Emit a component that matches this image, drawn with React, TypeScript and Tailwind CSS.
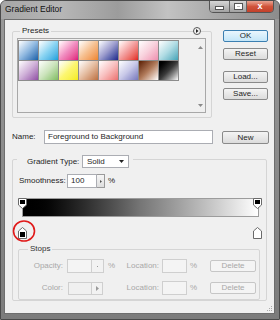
import React from "react";

// PRESET SWATCHES
const presets = [
  "bg-linear-to-br from-[#ffffff] via-[#8fb8e0] to-[#1560a8]",
  "bg-linear-to-br from-[#ffffff] via-[#8ad4f2] to-[#0aa0dc]",
  "bg-linear-to-br from-[#ffffff] via-[#f08cc0] to-[#de0a7c]",
  "bg-linear-to-br from-[#ffffff] via-[#f6c090] to-[#ee8428]",
  "bg-linear-to-br from-[#ffffff] via-[#9a9acc] to-[#24248a]",
  "bg-linear-to-br from-[#ffffff] via-[#f29a9a] to-[#e01c1c]",
  "bg-linear-to-br from-[#ffffff] via-[#f8d0dc] to-[#ee90b0]",
  "bg-linear-to-br from-[#ffffff] via-[#b0dce4] to-[#40a4b8]",
  "bg-linear-to-br from-[#ffffff] via-[#cfb0d8] to-[#9050a4]",
  "bg-linear-to-br from-[#ffffff] via-[#cce4bc] to-[#80bc60]",
  "bg-linear-to-br from-[#ffffff] via-[#fcf670] to-[#f4ec00]",
  "bg-linear-to-br from-[#ffffff] via-[#e4bca0] to-[#bc7040]",
  "bg-linear-to-br from-[#ffffff] via-[#f8c0c0] to-[#ea7070]",
  "bg-linear-to-br from-[#ffffff] via-[#c8c8e8] to-[#7878bc]",
  "bg-linear-to-br from-[#5a1e00] via-[#b07a5a] to-[#ffffff]",
  "bg-linear-to-br from-[#000000] via-[#3a3a3a] to-[#ffffff]",
];

const Btn = ({
  label,
  ok = false,
  className = "",
}: {
  label: string;
  ok?: boolean;
  className?: string;
}) => (
  <div
    className={`flex items-center justify-center rounded-[2px] border text-[8px] leading-none text-[#1e1e1e] ${
      ok
        ? "border-[#3c7fb1] bg-linear-to-b from-[#eaf6fd] to-[#c4e6f8]"
        : "border-[#8a8a8a] bg-linear-to-b from-[#f4f4f4] to-[#dcdcdc]"
    } ${className}`}
  >
    {label}
  </div>
);

const TopStop = ({ fill }: { fill: string }) => (
  <svg width="9" height="11" viewBox="0 0 9 11">
    <path d="M0.5 0.5 H8.5 V7 L4.5 10.5 L0.5 7 Z" fill="#fff" stroke="#6a6a6a" />
    <rect x="2" y="2" width="5" height="4" fill={fill} />
  </svg>
);

const BottomStop = ({ fill }: { fill: string }) => (
  <svg width="9" height="12" viewBox="0 0 9 12">
    <path d="M4.5 0.5 L8.5 4 V11.5 H0.5 V4 Z" fill="#fff" stroke="#6a6a6a" />
    <rect x="2" y="5" width="5" height="5" fill={fill} />
  </svg>
);

const App = () => {
  return (
    <div className="w-[280px] h-[320px] flex flex-col overflow-hidden rounded-t-[6px] border border-[#4a4a4a] bg-linear-to-b from-[#9a9a9a] to-[#7c7c7c] font-['Liberation_Sans',Arial,sans-serif] text-[8px] text-[#1e1e1e]">

      {/* TITLE BAR */}
      <div className="h-[18px] flex items-start bg-[linear-gradient(90deg,#a6a6a6_0%,#b6b6b6_22%,#9c9c9c_42%,#c2c2c2_60%,#a4a4a4_80%,#8c8c8c_100%)]">
        <span className="pl-[4px] pt-[4px] text-[8.5px] leading-none text-[#111]">
          Gradient Editor
        </span>

        <div className="ml-auto mr-[5px] -mt-px flex h-[13px] overflow-hidden rounded-b-[4px] border border-[#555]">
          <div className="w-[20px] flex items-end justify-center pb-[3px] bg-linear-to-b from-[#d6d6d6] to-[#a2a2a2] border-r border-[#666]">
            <div className="w-[7px] h-[2px] bg-white border border-[#555] box-content -mb-px" />
          </div>
          <div className="w-[17px] flex items-center justify-center bg-linear-to-b from-[#d6d6d6] to-[#a2a2a2] border-r border-[#666]">
            <div className="w-[7px] h-[5px] border-2 border-white outline outline-[#555]" />
          </div>
          <div className="w-[26px] flex items-center justify-center bg-linear-to-b from-[#e8a392] via-[#d0533a] to-[#c2402a] text-white text-[9px] font-bold leading-none">
            x
          </div>
        </div>
      </div>

      {/* CLIENT AREA */}
      <div className="ml-[3px] mr-[4px] h-[295px] border border-[#6e6e6e] bg-[#f0f0f0] relative">

        {/* PRESETS + BUTTONS */}
        <div className="flex items-start pt-[10px] pl-[7px]">

          <div className="relative mt-px w-[200px] h-[87px] rounded-[2px] border border-[#d5d5d5] pl-[4px] pt-[6px]">
            <span className="absolute left-[7px] -top-[6px] bg-[#f0f0f0] px-[2px] leading-[10px]">
              Presets
            </span>

            {/* menu arrow */}
            <div className="absolute right-[10px] -top-[5px] w-[8px] h-[8px] rounded-full border border-[#555] bg-[#f4f4f4] flex items-center justify-center">
              <svg width="4" height="4" viewBox="0 0 4 4">
                <path d="M1 0 L3.5 2 L1 4 Z" fill="#222" />
              </svg>
            </div>

            <div className="w-[189px] h-[75px] border border-[#a8a8a8] flex">
              <div className="flex-1 pt-px">
                <div className="inline-grid grid-cols-8 gap-px bg-[#8c8c8c] p-px">
                  {presets.map((p, i) => (
                    <div key={i} className={`w-[19px] h-[19px] ${p}`} />
                  ))}
                </div>
              </div>
              <div className="w-[10px] flex flex-col items-center justify-between pt-[7px] pb-[5px]">
                <svg width="5" height="3" viewBox="0 0 5 3">
                  <path d="M0 3 L2.5 0 L5 3 Z" fill="#8a8a8a" />
                </svg>
                <svg width="5" height="3" viewBox="0 0 5 3">
                  <path d="M0 0 L2.5 3 L5 0 Z" fill="#8a8a8a" />
                </svg>
              </div>
            </div>
          </div>

          <div className="ml-[11px] flex flex-col">
            <Btn label="OK" ok className="w-[45px] h-[12px]" />
            <Btn label="Reset" className="mt-[6px] w-[45px] h-[12px]" />
            <Btn label="Load..." className="mt-[11px] w-[45px] h-[12px]" />
            <Btn label="Save..." className="mt-[5px] w-[45px] h-[12px]" />
          </div>
        </div>

        {/* NAME ROW */}
        <div className="mt-[12px] pl-[7px] flex items-start">
          <span className="w-[32px] h-[14px] flex items-center">Name:</span>
          <div className="w-[169px] h-[14px] border border-[#abadb3] bg-white flex items-center pl-[3px]">
            Foreground to Background
          </div>
          <Btn label="New" className="ml-[9px] mt-px w-[47px] h-[13px]" />
        </div>

        {/* GRADIENT GROUP */}
        <div className="relative mt-[15px] ml-[7px] w-[255px] h-[142px] rounded-[2px] border border-[#d5d5d5]">
          <div className="absolute left-[4px] -top-[5px] flex items-center bg-[#f0f0f0] pl-[10px] pr-[4px]">
            <span className="w-[55px]">Gradient Type:</span>
            <div className="w-[47px] h-[13px] border border-[#abadb3] bg-white flex items-center pl-[4px] pr-[4px]">
              <span className="flex-1">Solid</span>
              <svg width="5" height="3" viewBox="0 0 5 3">
                <path d="M0 0 L2.5 3 L5 0 Z" fill="#222" />
              </svg>
            </div>
          </div>

          {/* SMOOTHNESS */}
          <div className="mt-[14px] pl-[6px] flex items-center h-[14px]">
            <span className="w-[48px]">Smoothness:</span>
            <div className="w-[30px] h-[14px] border border-[#abadb3] bg-white flex items-center pl-[3px]">
              100
            </div>
            <div className="w-[8px] h-[14px] border border-l-0 border-[#9a9a9a] bg-linear-to-b from-[#f6f6f6] to-[#dedede] flex items-center justify-center">
              <svg width="2" height="3" viewBox="0 0 2 3">
                <path d="M0 0 L2 1.5 L0 3 Z" fill="#555" />
              </svg>
            </div>
            <span className="ml-[3px]">%</span>
          </div>

          {/* GRADIENT BAR */}
          <div className="relative mt-[4px] ml-[9px] w-[237px] h-[41px]">
            <div className="absolute -left-[4px] top-0">
              <TopStop fill="#000" />
            </div>
            <div className="absolute left-[231px] top-0">
              <TopStop fill="#000" />
            </div>

            <div className="mt-[10px] h-[19px] border border-[#9c9c9c] bg-linear-to-r from-black via-[#767676] to-white" />

            <div className="absolute -left-[4px] top-[29px]">
              <BottomStop fill="#000" />
            </div>
            <div className="absolute left-[231px] top-[29px]">
              <BottomStop fill="#fff" />
            </div>

            {/* red highlight */}
            <svg className="absolute -left-[10px] top-[21px]" width="24" height="24" viewBox="0 0 24 24">
              <ellipse cx="12" cy="12" rx="10.5" ry="10" fill="none" stroke="#e01a1a" strokeWidth="1.6" />
            </svg>
          </div>

          {/* STOPS GROUP */}
          <div className="relative mt-[10px] ml-[5px] w-[242px] h-[51px] rounded-[2px] border border-[#d5d5d5]">
            <span className="absolute left-[9px] -top-[6px] bg-[#f0f0f0] px-[2px] leading-[10px] text-[#333]">
              Stops
            </span>

            <div className="mt-[9px] flex items-center h-[14px] text-[#a8a8a8]">
              <div className="w-[101px] flex items-center">
                <span className="w-[44px] text-right">Opacity:</span>
                <div className="ml-[4px] w-[25px] h-[14px] border border-[#cfcfcf] bg-[#f4f4f4]" />
                <div className="w-[12px] h-[14px] border border-l-0 border-[#cfcfcf] bg-[#f2f2f2] flex items-center justify-center">
                  <div className="w-px h-px bg-[#999]" />
                </div>
                <span className="ml-[4px]">%</span>
              </div>
              <span className="w-[39px] text-right">Location:</span>
              <div className="ml-[3px] w-[25px] h-[14px] border border-[#cfcfcf] bg-[#f4f4f4]" />
              <span className="ml-[3px] w-[20px]">%</span>
              <div className="w-[46px] h-[12px] rounded-[2px] border border-[#c6c6c6] bg-[#f4f4f4] flex items-center justify-center">
                Delete
              </div>
            </div>

            <div className="mt-[8px] flex items-center h-[14px] text-[#a8a8a8]">
              <div className="w-[101px] flex items-center">
                <span className="w-[44px] text-right">Color:</span>
                <div className="ml-[5px] w-[24px] h-[13px] border border-[#cfcfcf] bg-[#f0f0f0]" />
                <div className="w-[11px] h-[13px] border border-l-0 border-[#cfcfcf] bg-[#f2f2f2] flex items-center justify-center">
                  <svg width="3" height="5" viewBox="0 0 3 5">
                    <path d="M0 0 L3 2.5 L0 5 Z" fill="#9a9a9a" />
                  </svg>
                </div>
              </div>
              <span className="w-[39px] text-right">Location:</span>
              <div className="ml-[3px] w-[25px] h-[14px] border border-[#cfcfcf] bg-[#f4f4f4]" />
              <span className="ml-[3px] w-[20px]">%</span>
              <div className="w-[46px] h-[12px] rounded-[2px] border border-[#c6c6c6] bg-[#f4f4f4] flex items-center justify-center">
                Delete
              </div>
            </div>
          </div>
        </div>

        {/* size grip */}
        <svg className="absolute right-px bottom-px" width="6" height="6" viewBox="0 0 6 6">
          <rect x="4" y="0" width="1" height="1" fill="#aaa" />
          <rect x="2" y="2" width="1" height="1" fill="#aaa" />
          <rect x="4" y="2" width="1" height="1" fill="#aaa" />
          <rect x="0" y="4" width="1" height="1" fill="#aaa" />
          <rect x="2" y="4" width="1" height="1" fill="#aaa" />
          <rect x="4" y="4" width="1" height="1" fill="#aaa" />
        </svg>
      </div>
    </div>
  );
};

export default App;
